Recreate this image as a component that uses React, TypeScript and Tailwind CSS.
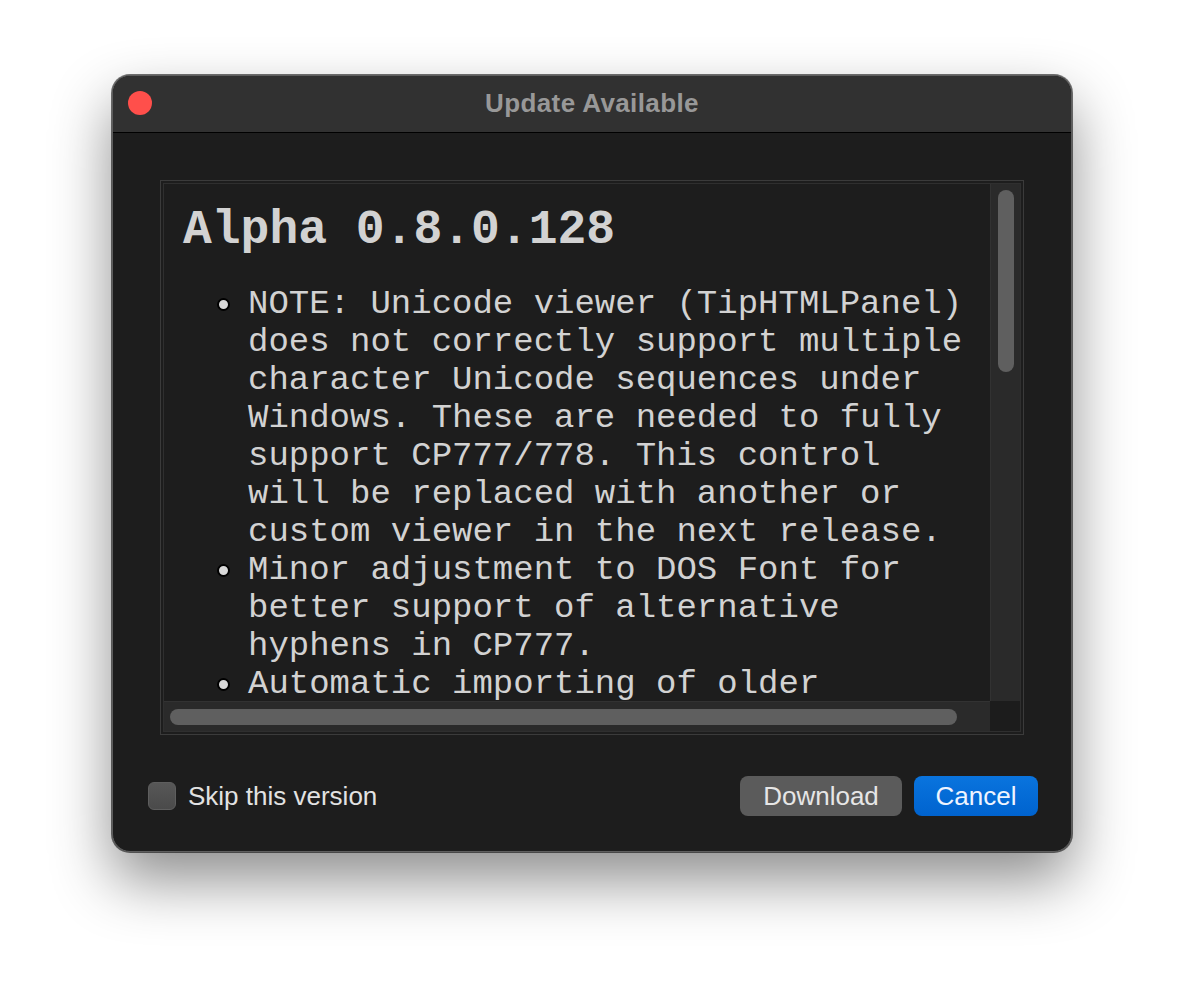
import React from "react";

const notes: string[] = [
  "NOTE: Unicode viewer (TipHTMLPanel) does not correctly support multiple character Unicode sequences under Windows. These are needed to fully support CP777/778. This control will be replaced with another or custom viewer in the next release.",
  "Minor adjustment to DOS Font for better support of alternative hyphens in CP777.",
  "Automatic importing of older settings.",
];

const Bullet = () => (
  <div className="w-[65px] h-[38px] shrink-0 flex items-center justify-end pr-[18px]">
    <span className="block w-[13px] h-[13px] rounded-full bg-[#d8d8d8] border-2 border-black" />
  </div>
);

export default function App() {
  return (
    <div className="min-h-screen bg-white pt-[75px] pl-[112px]">
      {/* Window */}
      <div className="w-[960px] h-[777px] rounded-[18px] border border-[#5e5e5e] bg-[#1d1d1d] overflow-hidden flex flex-col shadow-[0_0_0_1px_rgba(0,0,0,0.55),0_28px_60px_rgba(0,0,0,0.45)]">
        {/* Title bar */}
        <div className="h-[57px] shrink-0 bg-[#313131] border-b border-black flex items-center relative">
          <span className="absolute left-[15px] top-[15px] w-[24px] h-[24px] rounded-full bg-[#ff4f4b]" />
          <div className="flex-1 text-center text-[26px] leading-[30px] -mt-[2px] font-bold text-[#989898] font-['Liberation_Sans',Arial,sans-serif] tracking-[0.4px]">
            Update Available
          </div>
        </div>

        {/* Body */}
        <div className="flex-1 flex flex-col">
          {/* Release notes panel */}
          <div className="mx-[47px] mt-[47px] h-[555px] border border-[#3b3b3b] p-[2px]">
            <div className="h-full border border-[#2f2f2f] grid grid-cols-[1fr_30px] grid-rows-[1fr_30px]">
              <div className="overflow-hidden pl-[19px] pt-[18px] text-[#d2d2d2] font-['Liberation_Mono','Courier_New',monospace]">
                <h1 className="text-[48px] leading-[56px] font-bold whitespace-nowrap">Alpha 0.8.0.128</h1>
                <ul className="mt-[27px]">
                  {notes.map((n, i) => (
                    <li key={i} className="flex">
                      <Bullet />
                      <p className="w-[722px] shrink-0 text-[34px] leading-[38px]">{n}</p>
                    </li>
                  ))}
                </ul>
              </div>
              {/* Vertical scrollbar */}
              <div className="bg-[#2a2a2a] border-l border-[#323232] pt-[6px] pl-[7px]">
                <div className="w-[16px] h-[182px] rounded-full bg-[#5f5f5f]" />
              </div>
              {/* Horizontal scrollbar */}
              <div className="bg-[#2a2a2a] border-t border-[#323232] pt-[7px] pl-[6px]">
                <div className="w-[787px] h-[16px] rounded-full bg-[#5f5f5f]" />
              </div>
              <div className="bg-[#1c1c1c]" />
            </div>
          </div>

          {/* Footer */}
          <div className="mt-[41px] flex items-center justify-between pl-[35px] pr-[33px] font-['Liberation_Sans',Arial,sans-serif]">
            <label className="flex items-center gap-[12px]">
              <span className="w-[28px] h-[28px] rounded-[6px] bg-gradient-to-b from-[#575757] to-[#4a4a4a] border border-[#5e5e5e]" />
              <span className="text-[26px] text-[#e2e2e2]">Skip this version</span>
            </label>
            <div className="flex items-center gap-[12px]">
              <button className="w-[162px] h-[40px] rounded-[8px] bg-[#5b5b5b] text-[26px] text-[#e6e6e6] leading-none">
                Download
              </button>
              <button className="w-[124px] h-[40px] rounded-[8px] bg-gradient-to-b from-[#0a74de] to-[#0063cf] text-[26px] text-[#eef4ff] leading-none">
                Cancel
              </button>
            </div>
          </div>
        </div>
      </div>
    </div>
  );
}
